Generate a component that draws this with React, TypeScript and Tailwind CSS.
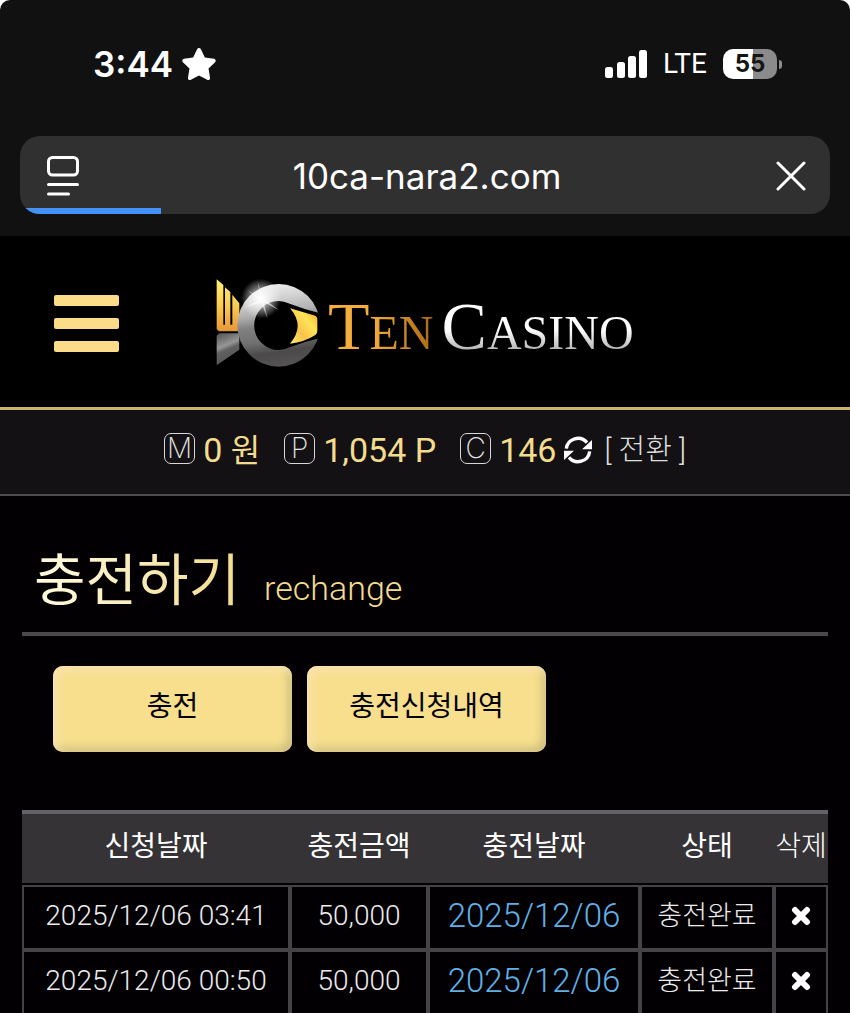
import { FaStar } from 'react-icons/fa';

const rows = [
    { requested: '2025/12/06 03:41', amount: '50,000', charged: '2025/12/06', status: '충전완료' },
    { requested: '2025/12/06 00:50', amount: '50,000', charged: '2025/12/06', status: '충전완료' },
];

const StatusBar = () => (
    <div className="flex items-center justify-between pl-[93px] pr-[68px] h-32">
        <div className="flex items-center gap-2 text-white">
            <span className="font-['Inter',sans-serif] font-semibold text-[35px] leading-10">3:44</span>
            <FaStar className="size-9" />
        </div>
        <div className="flex items-center gap-4">
            <svg className="w-11 h-7" viewBox="0 0 44 28" fill="#fff">
                <rect x="2" y="17" width="8" height="11" rx="2.5" />
                <rect x="14" y="12" width="8" height="16" rx="2.5" />
                <rect x="25" y="6" width="8" height="22" rx="2.5" />
                <rect x="36" y="0" width="8" height="28" rx="2.5" />
            </svg>
            <span className="font-['Roboto',sans-serif] text-[28px] leading-10 text-white">LTE</span>
            <div className="flex items-center gap-[2px]">
                <span className="flex items-center justify-center w-[54px] h-[30px] rounded-[10px] bg-linear-to-r from-white from-55% to-[#8b8b8b] to-55% font-['Inter',sans-serif] font-bold text-[24px] leading-7 text-[#151515]">
                    55
                </span>
                <span className="w-[3px] h-[9px] rounded-r-full bg-[#8b8b8b]" />
            </div>
        </div>
    </div>
);

const AddressBar = () => (
    <div className="px-5 pt-2 pb-[22px]">
        <div className="relative flex items-center justify-between h-[78px] pt-[2px] pl-6 pr-5 rounded-[20px] bg-[#303030] overflow-hidden">
            <button aria-label="Page menu" className="w-[38px]">
                <svg className="w-[38px] h-10" viewBox="0 0 38 40" fill="none" stroke="#fff" strokeWidth="3" strokeLinecap="round">
                    <rect x="4.500" y="1.500" width="29" height="17.500" rx="4" />
                    <path d="M4.500 28.500h29M4.500 38h20" />
                </svg>
            </button>
            <span className="font-['Inter',sans-serif] text-[35px] leading-10 text-white">10ca-nara2.com</span>
            <button aria-label="Stop loading" className="flex justify-center w-[38px]">
                <svg className="size-[30px]" viewBox="0 0 30 30" stroke="#fff" strokeWidth="3" strokeLinecap="round">
                    <path d="M2 2l26 26M28 2L2 28" />
                </svg>
            </button>
            <div className="absolute left-0 bottom-0 w-[141px] h-[6px] bg-[#4492f7]" />
        </div>
    </div>
);

const LogoMark = () => (
    <svg className="w-[107px] h-[94px]" viewBox="550 50 321 282">
        <defs>
            <linearGradient id="gold" x1="0" y1="0" x2="0" y2="1">
                <stop offset="0" stopColor="#fff07a" />
                <stop offset="0.5" stopColor="#fccb52" />
                <stop offset="1" stopColor="#e5963a" />
            </linearGradient>
            <linearGradient id="eye" x1="1" y1="0" x2="0" y2="1">
                <stop offset="0" stopColor="#f6a81f" />
                <stop offset="0.35" stopColor="#ffe458" />
                <stop offset="0.65" stopColor="#fbc34c" />
                <stop offset="1" stopColor="#ffef70" />
            </linearGradient>
            <linearGradient id="steel" x1="0.2" y1="0" x2="0.35" y2="1">
                <stop offset="0" stopColor="#f2f2f2" />
                <stop offset="0.2" stopColor="#d2d2d2" />
                <stop offset="0.38" stopColor="#b0b0b0" />
                <stop offset="0.52" stopColor="#808080" />
                <stop offset="0.7" stopColor="#707070" />
                <stop offset="0.85" stopColor="#4b494a" />
                <stop offset="1" stopColor="#545253" />
            </linearGradient>
            <linearGradient id="base" x1="0" y1="0" x2="0.3" y2="1">
                <stop offset="0" stopColor="#505050" />
                <stop offset="0.45" stopColor="#969696" />
                <stop offset="0.6" stopColor="#606060" />
                <stop offset="1" stopColor="#555" />
            </linearGradient>
            <radialGradient id="flare">
                <stop offset="0" stopColor="#fff" />
                <stop offset="0.3" stopColor="#fff" stopOpacity="0.7" />
                <stop offset="1" stopColor="#fff" stopOpacity="0" />
            </radialGradient>
        </defs>
        <path fill="url(#gold)" d="M561 60L581 77V196H586V84L602 98V196H608V106L629 132V216H568L561 209Z" />
        <path fill="url(#base)" d="M568 222H629V271L561 318V229Z" />
        <circle cx="747" cy="198" r="124" fill="url(#steel)" />
        <path fill="#000" d="M747 125Q762 125 780 133Q825 150 871 162V236Q825 247 780 264Q765 272 747 272A73.500 73.500 0 0 1 747 125Z" />
        <path fill="url(#eye)" d="M781 147L857 169Q863 172 863 180V215Q863 222 857 227Q825 248 781 253Q827 200 781 147Z" />
        <circle cx="694" cy="118" r="60" fill="url(#flare)" />
        <path fill="#fff" d="M684 66L697 114L748 153L702 128L714 178L695 130L648 143L690 121L652 92L692 115Z" opacity="0.6" />
    </svg>
);

const Header = () => (
    <header className="flex items-center h-[174px] pt-[3px] pl-[54px] border-b-[3px] border-[#c9b36c] bg-black">
        <button aria-label="Menu" className="flex flex-col gap-3 w-[65px]">
            <span className="h-[11px] rounded-[2px] bg-[#fbdc88]" />
            <span className="h-[11px] rounded-[2px] bg-[#fbdc88]" />
            <span className="h-[11px] rounded-[2px] bg-[#fbdc88]" />
        </button>
        <a href="#" className="flex items-center gap-2 ml-[94px] font-['Liberation_Serif',serif] text-[68px] leading-[72px] whitespace-nowrap">
            <LogoMark />
            <span className="flex items-baseline gap-2 pt-3">
                <span className="bg-linear-to-r from-[#f5ae3c] from-40% to-[#a86a10] bg-clip-text text-transparent">
                    T<span className="text-[48px]">EN</span>
                </span>
                <span className="bg-linear-to-b from-white from-50% to-[#aaa] to-80% bg-clip-text text-transparent">
                    C<span className="text-[48px]">ASINO</span>
                </span>
            </span>
        </a>
    </header>
);

const Coin = ({ letter }: { letter: string }) => (
    <span className="flex items-center justify-center size-[31px] rounded-[7px] border border-[#d8d8d8] font-['Inter',sans-serif] font-extralight text-[28px] leading-7 text-[#e4e4e4]">
        {letter}
    </span>
);

const Balance = () => (
    <div className="flex items-center justify-center h-[86px] pb-2 border-b-2 border-[#4c4a4d] bg-[#131113] text-[34px] leading-10 text-[#f3dc8e] whitespace-nowrap">
        <div className="flex items-center gap-2 mr-6">
            <Coin letter="M" />
            <span className="pt-1">0 <span className="text-[32px]">원</span></span>
        </div>
        <div className="flex items-center gap-2 mr-6">
            <Coin letter="P" />
            <span className="pt-1">1,054 P</span>
        </div>
        <div className="flex items-center gap-2">
            <Coin letter="C" />
            <span className="pt-1">146</span>
            <button className="flex items-center gap-3 pt-1 text-[29px] font-light text-[#dedede]">
                <svg className="size-7" viewBox="0 0 84 84" fill="none" stroke="#fff" strokeWidth="10">
                    <path d="M7 38A35 35 0 0 1 69 20M77 46A35 35 0 0 1 15 64" />
                    <path d="M84 12V40H54ZM0 72V44H30Z" fill="#fff" stroke="none" />
                </svg>
                <span>[ 전환 ]</span>
            </button>
        </div>
    </div>
);

const Recharge = () => (
    <main className="px-[22px] pt-10 bg-[#020003]">
        <div className="flex items-baseline gap-6 h-[100px] pl-3 border-b-4 border-[#4b494c]">
            <h1 className="text-[56px] leading-[90px] bg-linear-to-r from-[#fffbe0] to-[#f3dc8e] bg-clip-text text-transparent">충전하기</h1>
            <span className="text-[34px] font-light leading-10 text-[#f3dc8e]">rechange</span>
        </div>
        <div className="flex gap-[15px] px-[31px] pt-[30px] text-[28px] leading-10 text-black">
            <button className="w-[239px] h-[86px] pb-1 rounded-[10px] bg-[#f7df8e] shadow-[inset_4px_4px_8px_#fbe3b0,inset_-4px_-4px_8px_#cbbd7c]">충전</button>
            <button className="w-[239px] h-[86px] pb-1 rounded-[10px] bg-[#f7df8e] shadow-[inset_4px_4px_8px_#fbe3b0,inset_-4px_-4px_8px_#cbbd7c]">충전신청내역</button>
        </div>
        <table className="w-full mt-[58px] table-fixed border-separate border-spacing-0 text-center text-[28px] leading-10 font-light whitespace-nowrap text-[#ececec]">
            <thead>
                <tr className="h-[75px] text-white">
                    <th className="w-[268px] pb-1 font-normal border-t-4 border-t-[#656267] border-b-2 border-b-black bg-[#363337] bg-clip-padding">신청날짜</th>
                    <th className="w-[138px] pb-1 font-normal border-t-4 border-t-[#656267] border-b-2 border-b-black bg-[#363337] bg-clip-padding">충전금액</th>
                    <th className="w-[212px] pb-1 font-normal border-t-4 border-t-[#656267] border-b-2 border-b-black bg-[#363337] bg-clip-padding">충전날짜</th>
                    <th className="w-[134px] pb-1 font-normal border-t-4 border-t-[#656267] border-b-2 border-b-black bg-[#363337] bg-clip-padding">상태</th>
                    <th className="w-[54px] pb-1 font-light border-t-4 border-t-[#656267] border-b-2 border-b-black bg-[#363337] bg-clip-padding">삭제</th>
                </tr>
            </thead>
            <tbody>
                {rows.map((row) => (
                    <tr key={row.requested} className="h-[65px]">
                        <td className="pb-1 border-2 border-[#454346]">{row.requested}</td>
                        <td className="pb-1 border-2 border-[#454346]">{row.amount}</td>
                        <td className="pb-1 border-2 border-[#454346] text-[33px] text-[#5fb0e6]">{row.charged}</td>
                        <td className="pb-1 border-2 border-[#454346] text-[27px]">{row.status}</td>
                        <td className="pb-1 border-2 border-[#454346]">
                            <button aria-label="삭제" className="block mx-auto">
                                <svg className="size-5" viewBox="0 0 20 20" stroke="#fff" strokeWidth="6" strokeLinecap="round">
                                    <path d="M4 4l12 12M16 4L4 16" />
                                </svg>
                            </button>
                        </td>
                    </tr>
                ))}
            </tbody>
        </table>
    </main>
);

export default function App() {
    return (
        <div className="h-screen overflow-hidden bg-white">
            <div className="min-h-screen rounded-t-[10px] bg-[#111] font-['Roboto','Noto_Sans_CJK_KR',sans-serif]">
                <StatusBar />
                <AddressBar />
                <Header />
                <Balance />
                <Recharge />
            </div>
        </div>
    );
}
